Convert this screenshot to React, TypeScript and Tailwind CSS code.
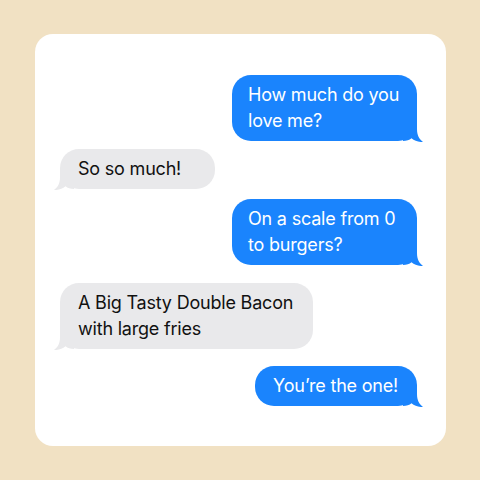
import React from "react";

function Tail({ side, color }: { side: "left" | "right"; color: string }) {
  return (
    <svg
      width="20"
      height="20"
      viewBox="0 0 20 20"
      className={
        side === "right"
          ? "absolute right-[-6px] bottom-[-1px]"
          : "absolute left-[-6px] bottom-[-1px] scale-x-[-1]"
      }
    >
      <path
        d="M0 0 H14 V7 C14 13 16 17 20 20 C15.5 20.3 11.5 18.8 8.5 16.3 C6.5 18 3.5 19 0 19 Z"
        fill={color}
      />
    </svg>
  );
}

function Bubble({
  side,
  text,
  widthClass,
  mtClass,
  plClass,
}: {
  side: "left" | "right";
  text: React.ReactNode;
  widthClass: string;
  mtClass: string;
  plClass: string;
}) {
  const blue = side === "right";
  return (
    <div className={`flex ${blue ? "justify-end" : "justify-start"} ${mtClass}`}>
      <div
        className={`relative ${widthClass} ${plClass} rounded-[19px] py-[7px] text-[18px] leading-[26px] tracking-[-0.2px] ${
          blue ? "bg-[#1a84fd] text-white" : "bg-[#e9e9eb] text-[#111]"
        }`}
      >
        <span className="relative z-10">{text}</span>
        <Tail side={side} color={blue ? "#1a84fd" : "#e9e9eb"} />
      </div>
    </div>
  );
}

export default function App() {
  return (
    <div
      className="w-[480px] h-[480px] bg-[#f1e1c3] pl-[35px] pr-[34px] pt-[34px] pb-[34px]"
      style={{ fontFamily: "Inter, 'Liberation Sans', sans-serif" }}
    >
      <div className="h-full w-full bg-white rounded-[18px] pl-[25px] pr-[29px] pt-[41px] flex flex-col">
        <Bubble
          side="right"
          widthClass="w-[185px]"
          mtClass="mt-0"
          plClass="pl-[16px]"
          text={
            <>
              How much do you
              <br />
              love me?
            </>
          }
        />
        <Bubble side="left" widthClass="w-[155px]" mtClass="mt-[8px]" plClass="pl-[18px]" text="So so much!" />
        <Bubble
          side="right"
          widthClass="w-[185px]"
          mtClass="mt-[10px]"
          plClass="pl-[16px]"
          text={
            <>
              On a scale from 0
              <br />
              to burgers?
            </>
          }
        />
        <Bubble
          side="left"
          widthClass="w-[253px]"
          mtClass="mt-[18px]"
          plClass="pl-[18px]"
          text={
            <>
              A Big Tasty Double Bacon
              <br />
              with large fries
            </>
          }
        />
        <Bubble side="right" widthClass="w-[162px]" mtClass="mt-[17px]" plClass="pl-[18px]" text="You’re the one!" />
      </div>
    </div>
  );
}
